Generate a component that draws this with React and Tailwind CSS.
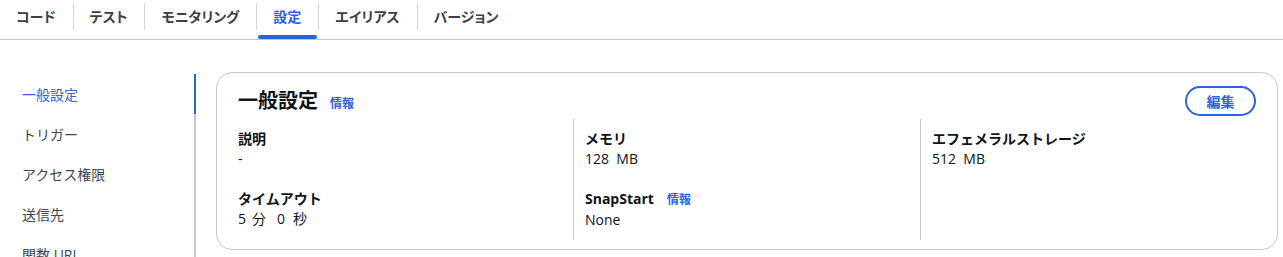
const FONT = { fontFamily: '"Open Sans", "Noto Sans", "Noto Sans CJK JP", sans-serif' };

const tabs = ['コード', 'テスト', 'モニタリング', '設定', 'エイリアス', 'バージョン'];
const nav = ['一般設定', 'トリガー', 'アクセス権限', '送信先', '関数 URL'];

function Tabs() {
  return (
    <div className="flex h-10 items-stretch border-b border-[#c6c6cd]">
      {tabs.map((t, i) => {
        const active = t === '設定';
        return (
          <div key={t} className="flex items-stretch">
            {i > 0 && <div className="mt-[3px] h-[27px] w-px bg-[#d5d5da]" />}
            <div className="relative flex items-center pb-[6px] pl-[16px] pr-[17px]">
              <span
                className={`text-[14px] font-bold [font-feature-settings:'palt'] ${active ? 'text-[#2f62d9]' : 'text-[#3b3f48]'}`}
              >
                {t}
              </span>
              {active && (
                <div className="absolute bottom-0 left-[1px] right-[1px] h-1 rounded-full bg-[#2f62d9]" />
              )}
            </div>
          </div>
        );
      })}
    </div>
  );
}

function Field({ label, info, children }) {
  return (
    <div>
      <div className="flex items-baseline gap-[13px] text-[14px] font-bold leading-5 text-[#0f141a]">
        {label}
        {info && <span className="text-[12px] text-[#2f62d9]">情報</span>}
      </div>
      <div className="text-[14px] leading-5 text-[#0f141a]">{children}</div>
    </div>
  );
}

export default function App() {
  return (
    <div className="h-[257px] overflow-hidden bg-white" style={FONT}>
      <Tabs />
      <div className="flex pt-8">
        <div className="w-[196px] shrink-0 pt-[2px]">
          <div className="border-r-2 border-[#c6c6cd]">
            {nav.map((n, i) => (
              <div key={n} className="relative flex h-10 items-center pl-[22px] text-[14px] text-[#424650]">
                <span className={i === 0 ? 'text-[#2f62d9]' : ''}>{n}</span>
                {i === 0 && <div className="absolute -right-[2px] top-0 h-10 w-[2px] bg-[#2f62d9]" />}
              </div>
            ))}
          </div>
        </div>
        <div className="ml-5 mr-[5px] flex-1 self-start rounded-2xl border border-[#c6c6cd] px-[21px] pb-[9px] pt-[13px]">
          <div className="flex h-[30px] items-center justify-between">
            <div className="flex items-baseline gap-[12px]">
              <h2 className="text-[20px] font-bold text-[#0f141a]">一般設定</h2>
              <span className="text-[12px] font-bold text-[#2f62d9]">情報</span>
            </div>
            <button className="h-[30px] w-[71px] rounded-full border-2 border-[#2f62d9] text-[14px] font-bold text-[#2f62d9]">
              編集
            </button>
          </div>
          <div className="mt-[3px] grid grid-cols-[335px_347px_1fr]">
            <div className="flex flex-col gap-5 py-[10px]">
              <Field label="説明">-</Field>
              <Field label="タイムアウト">
                <span>5</span>
                <span className="ml-[6px]">分</span>
                <span className="ml-[11px]">0</span>
                <span className="ml-[8px]">秒</span>
              </Field>
            </div>
            <div className="flex flex-col gap-5 border-l border-[#c6c6cd] py-[10px] pl-[11px]">
              <Field label="メモリ">128&nbsp;&nbsp;MB</Field>
              <Field label="SnapStart" info>None</Field>
            </div>
            <div className="flex flex-col gap-5 border-l border-[#c6c6cd] py-[10px] pl-[11px]">
              <Field label="エフェメラルストレージ">512&nbsp;&nbsp;MB</Field>
            </div>
          </div>
        </div>
      </div>
    </div>
  );
}
